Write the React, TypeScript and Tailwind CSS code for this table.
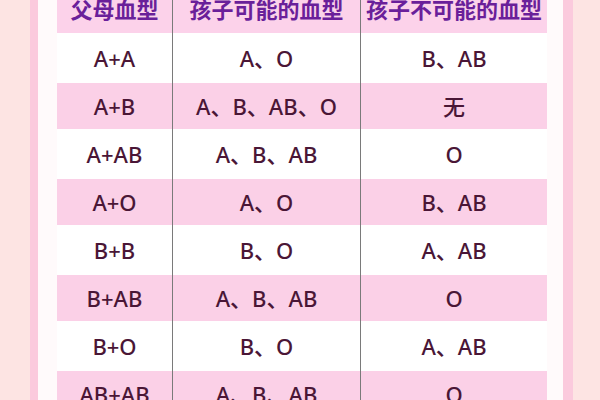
import React from "react";

const rows: [string, string, string][] = [
  ["A+A", "A、O", "B、AB"],
  ["A+B", "A、B、AB、O", "无"],
  ["A+AB", "A、B、AB", "O"],
  ["A+O", "A、O", "B、AB"],
  ["B+B", "B、O", "A、AB"],
  ["B+AB", "A、B、AB", "O"],
  ["B+O", "B、O", "A、AB"],
  ["AB+AB", "A、B、AB", "O"],
];

const font = { fontFamily: '"Noto Sans", "Noto Sans CJK SC", sans-serif' };

export default function App() {
  return (
    <div className="flex h-[400px] w-[600px] overflow-hidden bg-white" style={font}>
      <div className="w-[30px] bg-[#fde4e3]" />
      <div className="w-[8px] bg-[#fbcadd]" />
      <div className="w-[19px] bg-[#fffafb]" />
      <div className="flex w-[490px] flex-col">
        <div className="-mt-[15px] grid h-[48px] shrink-0 grid-cols-[115px_188px_187px] bg-[#fcd2ea] text-[22px] font-bold text-[#6a1f9a]">
          <div className="flex items-center justify-center">父母血型</div>
          <div className="flex items-center justify-center border-l-[1.5px] border-[#7a7a7a]">孩子可能的血型</div>
          <div className="flex items-center justify-center border-l-[1.5px] border-[#7a7a7a]">孩子不可能的血型</div>
        </div>
        {rows.map((r, i) => (
          <div
            key={i}
            className={
              i % 2 === 0
                ? "grid h-[50px] shrink-0 grid-cols-[115px_188px_187px] bg-white text-[22px] font-medium text-[#4a1636]"
                : "grid h-[46px] shrink-0 grid-cols-[115px_188px_187px] bg-[#fbd0e7] text-[22px] font-medium text-[#4a1636]"
            }
          >
            <div className="flex items-center justify-center">{r[0]}</div>
            <div className="flex items-center justify-center border-l-[1.5px] border-[#7a7a7a]">{r[1]}</div>
            <div className="flex items-center justify-center border-l-[1.5px] border-[#7a7a7a]">{r[2]}</div>
          </div>
        ))}
      </div>
      <div className="w-[16px] bg-[#fffafb]" />
      <div className="w-[10px] bg-[#fbcadd]" />
      <div className="flex-1 bg-[#fde4e3]" />
    </div>
  );
}
